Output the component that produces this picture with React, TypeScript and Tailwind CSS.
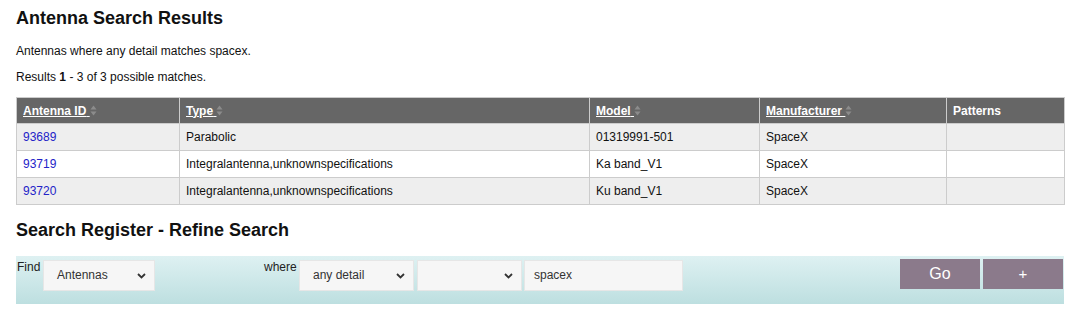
import React from "react";

const rows = [
  { id: "93689", type: "Parabolic", model: "01319991-501", maker: "SpaceX" },
  { id: "93719", type: "Integralantenna,unknownspecifications", model: "Ka band_V1", maker: "SpaceX" },
  { id: "93720", type: "Integralantenna,unknownspecifications", model: "Ku band_V1", maker: "SpaceX" },
];

function SortIcon() {
  return (
    <svg width="7" height="11" viewBox="0 0 7 11" className="inline-block align-[-1px]">
      <path d="M3.5 0.5 L6.5 4.5 L0.5 4.5 Z" fill="#8c8c8c" />
      <path d="M3.5 10.5 L6.5 6.5 L0.5 6.5 Z" fill="#8c8c8c" />
    </svg>
  );
}

function Chevron() {
  return (
    <svg width="9" height="6" viewBox="0 0 9 6" className="absolute right-[9px] top-[13px] pointer-events-none">
      <path d="M1 1 L4.5 4.5 L8 1" fill="none" stroke="#333" strokeWidth="1.8" />
    </svg>
  );
}

function Select({ value, width }: { value: string; width: string }) {
  return (
    <div className={`relative h-[31px] ${width}`}>
      <div className="h-full w-full bg-[#f6f6f6] border border-[#e6e6e6] pl-[13px] text-[12px] leading-[29px] text-[#333]">
        {value}
      </div>
      <Chevron />
    </div>
  );
}

export default function App() {
  return (
    <div className="min-h-screen bg-white text-[#111] font-['Liberation_Sans',Arial,sans-serif] px-[16px]">
      <h1 className="pt-[8px] text-[18px] leading-[21px] font-bold">Antenna Search Results</h1>
      <p className="mt-[15px] text-[12px] leading-[14px]">Antennas where any detail matches spacex.</p>
      <p className="mt-[12px] text-[12px] leading-[14px]">
        Results <b>1</b> - 3 of 3 possible matches.
      </p>

      <table className="mt-[13px] w-[1048px] table-fixed border-collapse text-[12px] leading-[14px]">
        <colgroup>
          <col className="w-[163px]" />
          <col className="w-[410px]" />
          <col className="w-[170px]" />
          <col className="w-[187px]" />
          <col className="w-[118px]" />
        </colgroup>
        <thead>
          <tr className="bg-[#666666] text-white">
            {["Antenna ID", "Type", "Model", "Manufacturer"].map((h) => (
              <th key={h} className="h-[26px] border border-[#cccccc] px-[6px] text-left font-bold">
                <span className="underline">{h} </span>
                <SortIcon />
              </th>
            ))}
            <th className="h-[26px] border border-[#cccccc] px-[6px] text-left font-bold">Patterns</th>
          </tr>
        </thead>
        <tbody>
          {rows.map((r, i) => (
            <tr key={r.id} className={i % 2 === 0 ? "bg-[#eeeeee]" : "bg-white"}>
              <td className="h-[27px] border border-[#cccccc] px-[6px]">
                <a href="#" className="text-[#2323c8]">{r.id}</a>
              </td>
              <td className="h-[27px] border border-[#cccccc] px-[6px]">{r.type}</td>
              <td className="h-[27px] border border-[#cccccc] px-[6px]">{r.model}</td>
              <td className="h-[27px] border border-[#cccccc] px-[6px]">{r.maker}</td>
              <td className="h-[27px] border border-[#cccccc] px-[6px]"></td>
            </tr>
          ))}
        </tbody>
      </table>

      <h2 className="mt-[15px] text-[18px] leading-[21px] font-bold">Search Register - Refine Search</h2>

      <div className="mt-[15px] w-[1048px] h-[48px] bg-gradient-to-b from-[#def1f2] to-[#bddfe0] flex items-start pt-[4px] pl-[1px]">
        <span className="w-[26px] text-[12px] leading-[14px] text-[#222]">Find</span>
        <Select value="Antennas" width="w-[112px]" />
        <span className="ml-[109px] w-[35px] text-[12px] leading-[14px] text-[#222]">where</span>
        <Select value="any detail" width="w-[115px]" />
        <div className="ml-[3px]">
          <Select value="" width="w-[105px]" />
        </div>
        <div className="ml-[2px] h-[31px] w-[159px] bg-[#f6f6f6] border border-[#e6e6e6] pl-[9px] text-[12px] leading-[29px] text-[#333]">
          spacex
        </div>
        <div className="ml-auto mr-[1px] flex gap-[3px] -mt-[1px]">
          <button className="w-[80px] h-[30px] bg-[#8b7a8b] text-white text-[16px] leading-[28px]">Go</button>
          <button className="w-[80px] h-[30px] bg-[#8b7a8b] text-white text-[15px] leading-[28px]">+</button>
        </div>
      </div>
    </div>
  );
}
